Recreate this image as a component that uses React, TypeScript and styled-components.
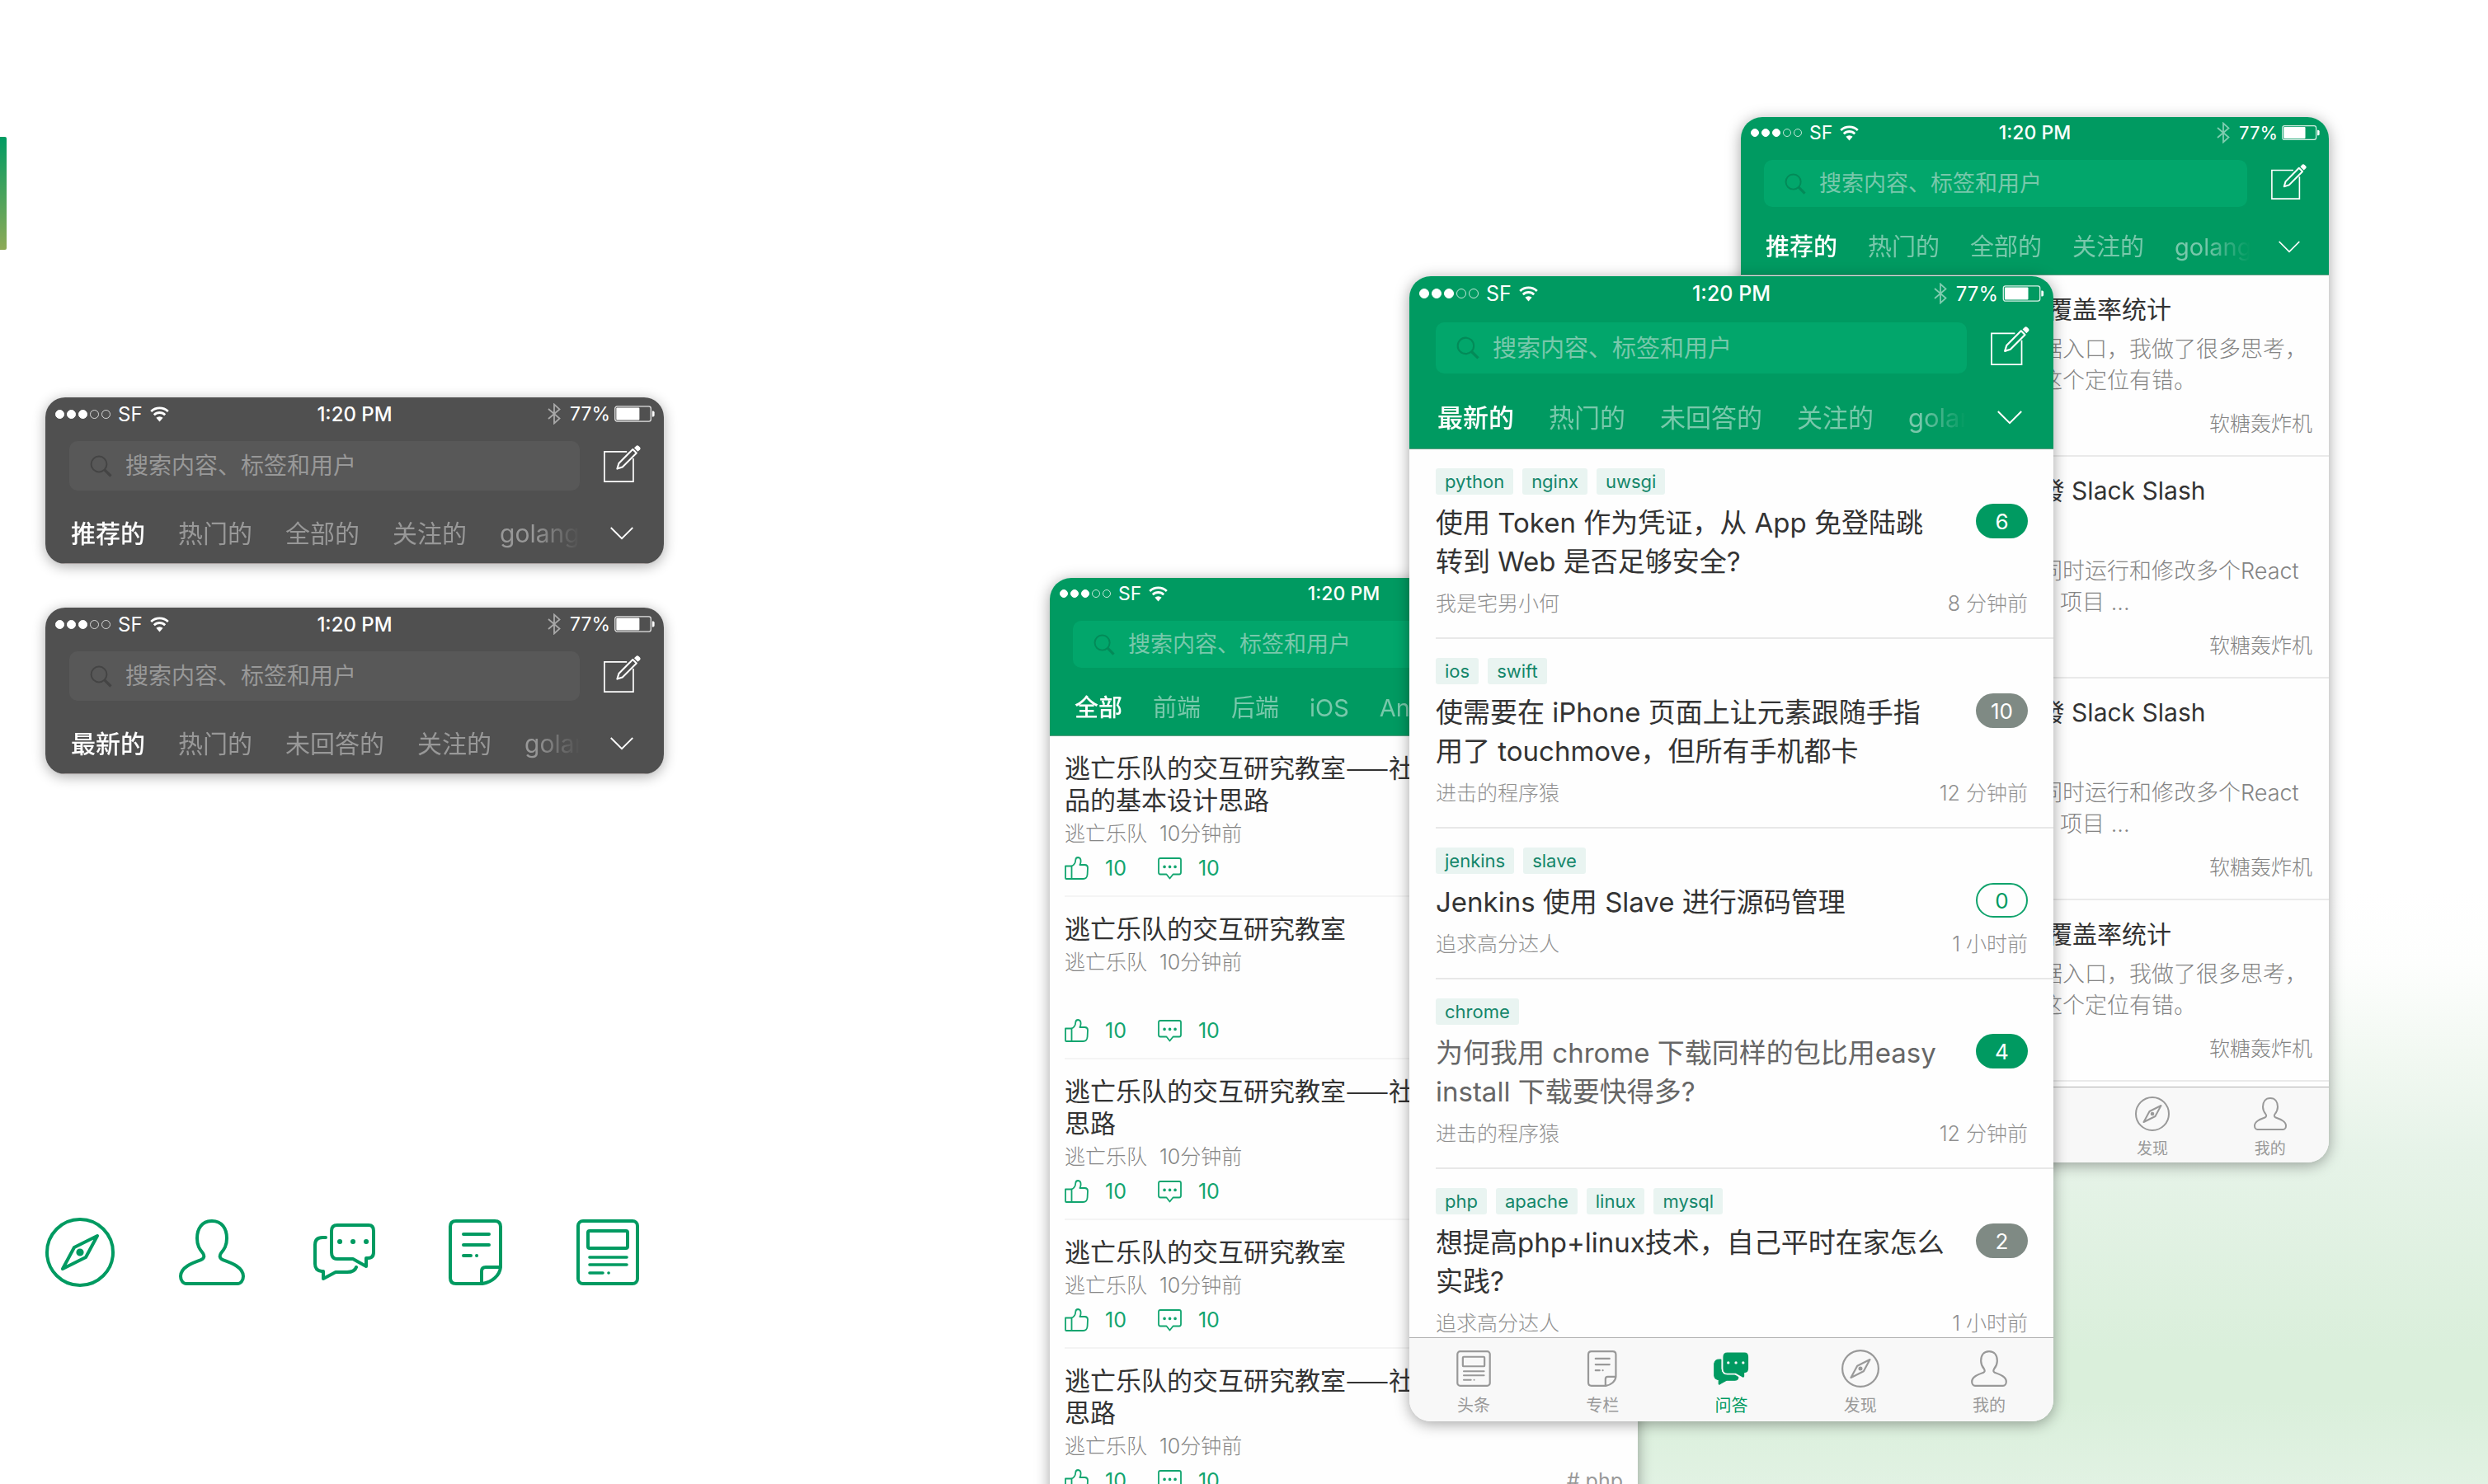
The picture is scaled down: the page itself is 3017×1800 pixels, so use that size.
import React from "react";
import styled, { createGlobalStyle, css } from "styled-components";

/* ---------- sizes shared by the three device scales ---------- */

type SizeKey = "s" | "m" | "l";

const sizes = {
  s: {
    status: 38, statusFont: 23, dot: 10, battery: 46, searchTop: 14, search: 57, searchFont: 27, glass: 26,
    tabFont: 29, tabGap: 37, tabRow: 83, tabPad: 15, edit: 44, chevron: 26, chevronEnd: 35,
    padLeft: 28, padRight: 26, rowGap: 29, nav: 92, navIcon: 42, navFont: 19,
  },
  m: {
    status: 40, statusFont: 24, dot: 11, battery: 49, searchTop: 13, search: 60, searchFont: 28, glass: 27,
    tabFont: 30, tabGap: 40, tabRow: 89, tabPad: 16, edit: 46, chevron: 28, chevronEnd: 37,
    padLeft: 29, padRight: 27, rowGap: 29, nav: 98, navIcon: 44, navFont: 20,
  },
  l: {
    status: 42, statusFont: 25, dot: 12, battery: 51, searchTop: 14, search: 62, searchFont: 29, glass: 28,
    tabFont: 31, tabGap: 42, tabRow: 92, tabPad: 16, edit: 48, chevron: 30, chevronEnd: 38,
    padLeft: 32, padRight: 28, rowGap: 29, nav: 102, navIcon: 46, navFont: 20,
  },
};

const tones = {
  green: { bar: "#009a61", field: "#02a66b", glass: "#038a58", hint: "#78c8ab", line: "#5f9c83" },
  gray: { bar: "#505050", field: "#585858", glass: "#444444", hint: "#989898", line: "#a8a0a0" },
};

type ToneKey = keyof typeof tones;

const latin = `"Inter", "Noto Sans CJK SC", sans-serif`;
const hanzi = `"Noto Sans CJK SC", sans-serif`;

const GlobalStyle = createGlobalStyle`
  *, *::before, *::after { box-sizing: border-box; }
  body { margin: 0; background: #fff; font-family: ${latin}; color: #333; }
  h2, p, ul { margin: 0; padding: 0; }
  ul { list-style: none; }
  button { border: 0; padding: 0; background: none; font: inherit; color: inherit; cursor: pointer; }
  a { color: inherit; text-decoration: none; }
  svg { display: block; flex: none; }
`;

/* ---------- page frame ---------- */

const Page = styled.main`
  display: flex;
  justify-content: space-between;
  height: 100vh;
  overflow: hidden;
  background:
    linear-gradient(180deg, #fff 0, #fdfefd 90px, #f1f8f1 210px, #e6f3e8 320px, #daefdb 560px, #daefdb 620px, #e4f3e6 760px)
    right bottom / 1500px 720px no-repeat,
    #fff;
`;

const Aside = styled.section`
  width: 805px;
  flex: none;
  padding-top: 166px;
`;

const Marker = styled.div`
  width: 8px;
  height: 137px;
  border-radius: 0 2px 2px 0;
  background: linear-gradient(180deg, #009b62, #8eaa56);
`;

const Samples = styled.div`
  display: flex;
  flex-direction: column;
  gap: 53px;
  margin-top: 179px;
  padding-left: 55px;
`;

const Sample = styled.div`
  border-radius: 24px;
  overflow: hidden;
  box-shadow: 0 3px 16px rgba(0, 0, 0, 0.32);
`;

const IconRow = styled.div`
  display: flex;
  gap: 76px;
  margin-top: 538px;
  padding-left: 55px;
  color: #009a61;
`;

const Showcase = styled.section`
  display: grid;
  grid-template-columns: 436px 277px 125px 379px 334px;
  align-items: start;
  padding-right: 193px;
`;

const Phone = styled.article<{ $area: string; $top: number; $layer: number }>`
  grid-row: 1;
  grid-column: ${(p) => p.$area};
  margin-top: ${(p) => p.$top}px;
  z-index: ${(p) => p.$layer};
  display: flex;
  flex-direction: column;
  aspect-ratio: 750 / 1334;
  border-radius: 26px;
  overflow: hidden;
  background: #fefefe;
  box-shadow: 0 3px 18px rgba(0, 0, 0, 0.36);
`;

const Feed = styled.div`
  flex: 1;
  min-height: 0;
  overflow: hidden;
`;

/* ---------- top bar ---------- */

const Bar = styled.header<{ $tone: ToneKey }>`
  flex: none;
  background: ${(p) => tones[p.$tone].bar};
  border-bottom: 1px solid ${(p) => tones[p.$tone].line};
  color: #fff;
`;

const Status = styled.div<{ $size: SizeKey }>`
  display: grid;
  grid-template-columns: 1fr auto 1fr;
  align-items: center;
  height: ${(p) => sizes[p.$size].status}px;
  padding: 0 11px;
  font-size: ${(p) => sizes[p.$size].statusFont}px;
`;

const StatusGroup = styled.div`
  display: flex;
  align-items: center;
  gap: 9px;
  padding-left: 1px;
`;

const StatusEnd = styled.div<{ $size: SizeKey }>`
  display: flex;
  align-items: center;
  justify-content: flex-end;
  gap: 5px;
  font-size: ${(p) => sizes[p.$size].statusFont - 1}px;
`;

const Percent = styled.span`
  padding-left: 6px;
`;

const Dots = styled.span`
  display: flex;
  gap: 3px;
`;

const Dot = styled.i<{ $size: SizeKey; $on: boolean }>`
  width: ${(p) => sizes[p.$size].dot}px;
  height: ${(p) => sizes[p.$size].dot}px;
  border: 1px solid #fff;
  border-radius: 50%;
  opacity: ${(p) => (p.$on ? 1 : 0.75)};
  background: ${(p) => (p.$on ? "#fff" : "transparent")};
`;

const Clock = styled.time`
  font-weight: 500;
`;

const SearchRow = styled.div<{ $size: SizeKey }>`
  display: flex;
  align-items: flex-start;
  gap: ${(p) => sizes[p.$size].rowGap}px;
  padding: ${(p) => sizes[p.$size].searchTop}px ${(p) => sizes[p.$size].padRight}px 0
    ${(p) => sizes[p.$size].padLeft}px;
`;

const SearchBox = styled.label<{ $size: SizeKey; $tone: ToneKey }>`
  flex: 1;
  display: flex;
  align-items: center;
  gap: 16px;
  height: ${(p) => sizes[p.$size].search}px;
  padding-left: 25px;
  border-radius: 10px;
  background: ${(p) => tones[p.$tone].field};
  color: ${(p) => tones[p.$tone].glass};
`;

const SearchInput = styled.input<{ $size: SizeKey; $tone: ToneKey }>`
  flex: 1;
  min-width: 0;
  border: 0;
  padding: 0 0 4px;
  outline: 0;
  background: none;
  color: #fff;
  font-family: ${hanzi};
  font-size: ${(p) => sizes[p.$size].searchFont}px;
  &::placeholder { color: ${(p) => tones[p.$tone].hint}; opacity: 1; }
`;

const ComposeButton = styled.button`
  margin-top: 4px;
`;

const TabRow = styled.nav<{ $size: SizeKey }>`
  display: flex;
  align-items: center;
  justify-content: space-between;
  height: ${(p) => sizes[p.$size].tabRow - 1}px;
  padding: ${(p) => sizes[p.$size].tabPad}px ${(p) => sizes[p.$size].chevronEnd}px 0
    ${(p) => sizes[p.$size].padLeft + 2}px;
`;

const Tabs = styled.div<{ $size: SizeKey }>`
  flex: 1;
  min-width: 0;
  display: flex;
  gap: ${(p) => sizes[p.$size].tabGap}px;
  margin-right: ${(p) => sizes[p.$size].chevron + 8}px;
  overflow: hidden;
  mask-image: linear-gradient(90deg, #000 calc(100% - 56px), transparent);
`;

const Tab = styled.button<{ $size: SizeKey; $tone: ToneKey; $active: boolean }>`
  flex: none;
  font-size: ${(p) => sizes[p.$size].tabFont}px;
  line-height: 44px;
  font-weight: ${(p) => (p.$active ? 500 : 400)};
  color: ${(p) => (p.$active ? "#fff" : tones[p.$tone].hint)};
`;

/* ---------- bottom bar ---------- */

const NavBar = styled.nav<{ $size: SizeKey }>`
  flex: none;
  display: grid;
  grid-template-columns: repeat(5, 1fr);
  height: ${(p) => sizes[p.$size].nav}px;
  border-top: 1px solid #b0b0b0;
  background: #f8f8f8;
`;

const NavItem = styled.button<{ $size: SizeKey; $active: boolean }>`
  display: flex;
  flex-direction: column;
  align-items: center;
  justify-content: center;
  gap: 8px;
  padding-top: 8px;
  font-size: ${(p) => sizes[p.$size].navFont}px;
  line-height: 28px;
  color: ${(p) => (p.$active ? "#009a61" : "#999")};
`;

/* ---------- article list (left) ---------- */

const Story = styled.section<{ $tall?: boolean }>`
  display: flex;
  flex-direction: column;
  min-height: ${(p) => (p.$tall ? 197 : 0)}px;
  margin-left: 18px;
  padding: 17px 18px 14px 0;
  border-bottom: 2px solid #f4f4f4;
`;

const StoryTitle = styled.h2`
  font: 400 31px/39px ${hanzi};
  white-space: pre-line;
`;

const StoryMeta = styled.p`
  display: flex;
  gap: 15px;
  font-size: 25px;
  line-height: 46px;
  font-weight: 300;
  color: #868686;
`;

const Stats = styled.div`
  display: flex;
  align-items: center;
  gap: 38px;
  height: 38px;
  margin-top: auto;
  color: #12a56f;
  font-size: 25px;
`;

const Stat = styled.button`
  display: flex;
  align-items: center;
  gap: 20px;
`;

const Topic = styled.a`
  margin-left: auto;
  color: #999;
`;

/* ---------- question list (centre) ---------- */

const Question = styled.section`
  margin-left: 32px;
  padding: 23px 31px 23px 0;
  border-bottom: 2px solid #e8e8e8;
`;

const Tags = styled.ul`
  display: flex;
  gap: 11px;
`;

const Tag = styled.a`
  display: block;
  padding: 0 11px;
  border-radius: 3px;
  background: #e9f4f1;
  color: #14866a;
  font-size: 22px;
  line-height: 32px;
`;

const QuestionBody = styled.div`
  display: flex;
  justify-content: space-between;
  align-items: flex-start;
  margin-top: 11px;
`;

const QuestionTitle = styled.h2<{ $read?: boolean }>`
  font-size: 33px;
  line-height: 47px;
  font-weight: 400;
  white-space: pre-line;
  color: ${(p) => (p.$read ? "#666" : "#333")};
`;

const badgeLook = {
  solid: css`background: #009a61; color: #fff;`,
  muted: css`background: #7f8a84; color: #fff;`,
  empty: css`border: 2px solid #10a36c; color: #009a61;`,
};

const Badge = styled.span<{ $look: keyof typeof badgeLook }>`
  flex: none;
  display: flex;
  align-items: center;
  justify-content: center;
  width: 63px;
  height: 42px;
  border-radius: 21px;
  font-size: 26px;
  ${(p) => badgeLook[p.$look]}
`;

const QuestionMeta = styled.p`
  display: flex;
  justify-content: space-between;
  margin-top: 9px;
  font-size: 25px;
  line-height: 36px;
  font-weight: 300;
  color: #909090;
`;

/* ---------- column list (right) ---------- */

const Post = styled.section`
  padding: 17px 20px 20px 12px;
  border-bottom: 2px solid #eaeaea;
`;

const PostTitle = styled.h2<{ $tall: boolean }>`
  min-height: ${(p) => (p.$tall ? 97 : 48)}px;
  font-size: 30px;
  line-height: 48px;
  font-weight: 400;
  white-space: nowrap;
`;

const PostText = styled.p`
  margin-top: 6px;
  font-size: 27px;
  line-height: 38px;
  font-weight: 300;
  white-space: pre;
  color: #848484;
`;

const PostAuthor = styled.p`
  margin-top: 15px;
  font-size: 25px;
  line-height: 36px;
  font-weight: 300;
  text-align: right;
  color: #848484;
`;

/* ---------- drawings ---------- */

type IconName = "news" | "note" | "chat" | "chatSolid" | "compass" | "person";

const frontBubble =
  "M34 9H72Q78 9 78 16V42Q78 49 71 49H69V59L53 50H34Q27 50 27 42V16Q27 9 34 9Z";

const shapes: Record<IconName, React.ReactNode> = {
  compass: (
    <>
      <circle cx="42" cy="42" r="40" />
      <path d="M63 22L49 48L21 62L35 36Z" />
      <circle cx="42" cy="42" r="2.6" fill="currentColor" />
    </>
  ),
  person: (
    <path d="M42 4C54 4 60 13 60 25C60 34 57 38 53 43C51 46 51 49 55 51C66 55 80 60 80 71C80 76 77 80 73 80H11C7 80 4 76 4 71C4 60 18 55 29 51C33 49 33 46 31 43C27 38 24 34 24 25C24 13 30 4 42 4Z" />
  ),
  chat: (
    <>
      <path d={frontBubble} />
      <path d="M20 24H16Q7 24 7 33V56Q7 64 15 65H17V74L32 66H46Q55 66 57 60" />
      <path d="M37 29h.1M53 29h.1M69 29h.1" strokeWidth="6" />
    </>
  ),
  chatSolid: (
    <>
      <path
        d="M20 22H16Q7 22 5 31V58Q6 66 15 67V76Q16 78 18 76L32 68H50Q58 68 58 61L50 56H34Q20 54 20 42Z"
        fill="currentColor"
        strokeWidth="2"
      />
      <path d={frontBubble} stroke="#f8f8f8" strokeWidth="11" />
      <path d={frontBubble} fill="currentColor" strokeWidth="5" />
      <path d="M36 29h.1M53 29h.1M69 29h.1" stroke="#f8f8f8" strokeWidth="6" />
    </>
  ),
  note: (
    <>
      <path d="M72 60V11Q72 4 65 4H18Q11 4 11 11V73Q11 80 18 80H50C62 78 71 70 72 60ZM49 80V65Q49 60 54 60H72" />
      <path d="M27 20H58M27 33H58M27 46H36M43 46h.1" />
    </>
  ),
  news: (
    <>
      <rect x="6" y="4" width="72" height="76" rx="6" />
      <rect x="18" y="16" width="48" height="21" rx="2" />
      <path d="M20 48H65M20 57H65M20 67H36M43 67h.1" strokeWidth="3.6" />
    </>
  ),
};

const Icon = ({ name, size }: { name: IconName; size: number }) => (
  <svg width={size} height={size} viewBox="0 0 84 84" fill="none" stroke="currentColor" strokeWidth="4" strokeLinecap="round" strokeLinejoin="round" aria-hidden="true">
    {shapes[name]}
  </svg>
);

const Wifi = () => (
  <svg width="23" height="20" viewBox="0 0 23 20" fill="none" stroke="#fff" strokeWidth="2.8" aria-hidden="true">
    <path d="M1.2 7A15 15 0 0 1 21.8 7M4.8 11.2A9.6 9.6 0 0 1 18.2 11.2" />
    <path d="M11.5 19.5L7.4 14.8A6 6 0 0 1 15.6 14.8Z" fill="#fff" stroke="none" />
  </svg>
);

const Bluetooth = () => (
  <svg width="16" height="26" viewBox="0 0 16 26" fill="none" stroke="#fff" strokeWidth="1.8" opacity="0.5" aria-hidden="true">
    <path d="M1 7L14.5 18.6L8 24.5V1.5L14.5 7.4L1 19" />
  </svg>
);

const Battery = ({ size }: { size: number }) => (
  <svg width={size} height="20" viewBox="0 0 50 20" fill="none" aria-hidden="true">
    <rect x="0.8" y="0.8" width="44.4" height="18.4" rx="2.6" stroke="#fff" strokeWidth="1.3" opacity="0.85" />
    <rect x="2.4" y="2.4" width="28.6" height="15.2" rx="1" fill="#fff" />
    <path d="M46.8 6.5H48Q49.6 6.5 49.6 8.2V11.8Q49.6 13.5 48 13.5H46.8Z" fill="#fff" />
  </svg>
);

const Glass = ({ size }: { size: number }) => (
  <svg width={size} height={size} viewBox="0 0 27 27" fill="none" stroke="currentColor" strokeWidth="2" aria-hidden="true">
    <circle cx="11" cy="11" r="9.4" />
    <path d="M17.8 17.8L25.5 25.5" strokeWidth="3.2" />
  </svg>
);

const Compose = ({ size }: { size: number }) => (
  <svg width={size} height={size} viewBox="0 0 49 49" fill="none" stroke="#fff" strokeWidth="1.8" aria-hidden="true">
    <path d="M30 9.5H1V48H38.3V18" />
    <path d="M17.5 31.5L19.6 24.6L37.6 6.4L42.4 11.2L24.3 29.4Z" strokeWidth="2.2" strokeLinejoin="round" />
    <path d="M39.4 4.6L42.2 1.8Q43.6 .6 45.2 2.1L46.9 3.8Q48.3 5.4 47 6.7L44.2 9.4Z" fill="#fff" stroke="none" />
  </svg>
);

const Chevron = ({ size }: { size: number }) => (
  <svg width={size} height={size / 2 + 2} viewBox="0 0 30 17" fill="none" stroke="#fff" strokeWidth="2" aria-hidden="true">
    <path d="M.8 1L15 15.2L29.2 1" />
  </svg>
);

const Thumb = () => (
  <svg width="29" height="28" viewBox="0 0 29 28" fill="none" stroke="currentColor" strokeWidth="1.8" strokeLinejoin="round" aria-hidden="true">
    <path d="M1 11.5H8.5V27H2Q1 27 1 26ZM8.5 11.5Q13 9.5 13.2 4.5Q13.4 1 16.2 1Q19.6 1.2 19.6 5.5Q19.6 8 18.4 10H24.5Q28 10.2 28 13.4L27.6 21.5Q27.2 27 22.5 27H8.5" />
  </svg>
);

const Bubble = () => (
  <svg width="29" height="27" viewBox="0 0 29 27" fill="none" stroke="currentColor" strokeWidth="1.8" strokeLinejoin="round" strokeLinecap="round" aria-hidden="true">
    <path d="M3 1H26Q28 1 28 3V18Q28 20.5 26 20.5H18.5L14.5 25.5L10.5 20.5H3Q1 20.5 1 18V3Q1 1 3 1Z" />
    <path d="M8 11.4h.1M14.5 11.4h.1M21 11.4h.1" strokeWidth="3.6" />
  </svg>
);

/* ---------- assembled parts ---------- */

const TopBar = ({ size, tone, tabs }: { size: SizeKey; tone: ToneKey; tabs: string[] }) => (
  <Bar $tone={tone}>
    <Status $size={size}>
      <StatusGroup>
        <Dots>
          {[0, 1, 2, 3, 4].map((n) => (
            <Dot key={n} $size={size} $on={n < 3} />
          ))}
        </Dots>
        <span>SF</span>
        <Wifi />
      </StatusGroup>
      <Clock>1:20 PM</Clock>
      <StatusEnd $size={size}>
        <Bluetooth />
        <Percent>77%</Percent>
        <Battery size={sizes[size].battery} />
      </StatusEnd>
    </Status>
    <SearchRow $size={size}>
      <SearchBox $size={size} $tone={tone}>
        <Glass size={sizes[size].glass} />
        <SearchInput $size={size} $tone={tone} type="text" aria-label="搜索" placeholder="搜索内容、标签和用户" />
      </SearchBox>
      <ComposeButton type="button" aria-label="撰写">
        <Compose size={sizes[size].edit} />
      </ComposeButton>
    </SearchRow>
    <TabRow $size={size}>
      <Tabs $size={size}>
        {tabs.map((label, i) => (
          <Tab key={label} type="button" $size={size} $tone={tone} $active={i === 0}>
            {label}
          </Tab>
        ))}
      </Tabs>
      <button type="button" aria-label="更多">
        <Chevron size={sizes[size].chevron} />
      </button>
    </TabRow>
  </Bar>
);

const navEntries: { label: string; icon: IconName; activeIcon?: IconName }[] = [
  { label: "头条", icon: "news" },
  { label: "专栏", icon: "note" },
  { label: "问答", icon: "chat", activeIcon: "chatSolid" },
  { label: "发现", icon: "compass" },
  { label: "我的", icon: "person" },
];

const BottomNav = ({ size, active }: { size: SizeKey; active: string }) => (
  <NavBar $size={size}>
    {navEntries.map(({ label, icon, activeIcon }) => {
      const on = label === active;
      return (
        <NavItem key={label} type="button" $size={size} $active={on}>
          <Icon name={on && activeIcon ? activeIcon : icon} size={sizes[size].navIcon} />
          {label}
        </NavItem>
      );
    })}
  </NavBar>
);

const longTitle = "逃亡乐队的交互研究教室——社\n思路";
const shortTitle = "逃亡乐队的交互研究教室";

const stories = [
  { title: "逃亡乐队的交互研究教室——社\n品的基本设计思路" },
  { title: shortTitle, tall: true },
  { title: longTitle },
  { title: shortTitle },
  { title: longTitle, topic: "# php" },
];

const questions: {
  tags: string[]; title: string; count: number; look: keyof typeof badgeLook; author: string; time: string; read?: boolean;
}[] = [
  { tags: ["python", "nginx", "uwsgi"], title: "使用 Token 作为凭证，从 App 免登陆跳\n转到 Web 是否足够安全?", count: 6, look: "solid", author: "我是宅男小何", time: "8 分钟前" },
  { tags: ["ios", "swift"], title: "使需要在 iPhone 页面上让元素跟随手指\n用了 touchmove，但所有手机都卡", count: 10, look: "muted", author: "进击的程序猿", time: "12 分钟前" },
  { tags: ["jenkins", "slave"], title: "Jenkins 使用 Slave 进行源码管理", count: 0, look: "empty", author: "追求高分达人", time: "1 小时前" },
  { tags: ["chrome"], title: "为何我用 chrome 下载同样的包比用easy\ninstall 下载要快得多?", count: 4, look: "solid", author: "进击的程序猿", time: "12 分钟前", read: true },
  { tags: ["php", "apache", "linux", "mysql"], title: "想提高php+linux技术，自己平时在家怎么\n实践?", count: 2, look: "muted", author: "追求高分达人", time: "1 小时前" },
];

const coverage = {
  title: "前端项目如何进行单元测试覆盖率统计",
  tall: false,
  text: "关于如何重新设计产品中的数据入口，我做了很多思考，\n最后还是觉得之前我们对于它这个定位有错。",
};
const slack = {
  title: "一步步學用 TypeScript 開發 Slack Slash",
  tall: true,
  text: "在一台电脑上面可以很方便地同时运行和修改多个React\n以及其他各类常见的 WebView 项目 ...",
};
const posts = [coverage, slack, slack, coverage];

const assetIcons: IconName[] = ["compass", "person", "chat", "note", "news"];

export default function App() {
  return (
    <>
      <GlobalStyle />
      <Page>
        <Aside>
          <Marker />
          <Samples>
            <Sample>
              <TopBar size="m" tone="gray" tabs={["推荐的", "热门的", "全部的", "关注的", "golang"]} />
            </Sample>
            <Sample>
              <TopBar size="m" tone="gray" tabs={["最新的", "热门的", "未回答的", "关注的", "golang"]} />
            </Sample>
          </Samples>
          <IconRow>
            {assetIcons.map((name) => (
              <Icon key={name} name={name} size={84} />
            ))}
          </IconRow>
        </Aside>

        <Showcase>
          <Phone $area="4 / 6" $top={142} $layer={1}>
            <TopBar size="s" tone="green" tabs={["推荐的", "热门的", "全部的", "关注的", "golang"]} />
            <Feed>
              {posts.map((post, i) => (
                <Post key={i}>
                  <PostTitle $tall={post.tall}>{post.title}</PostTitle>
                  <PostText>{post.text}</PostText>
                  <PostAuthor>软糖轰炸机</PostAuthor>
                </Post>
              ))}
            </Feed>
            <BottomNav size="s" active="专栏" />
          </Phone>

          <Phone $area="1 / 3" $top={701} $layer={2}>
            <TopBar size="s" tone="green" tabs={["全部", "前端", "后端", "iOS", "Android", "golang"]} />
            <Feed>
              {stories.map((story, i) => (
                <Story key={i} $tall={story.tall}>
                  <StoryTitle>{story.title}</StoryTitle>
                  <StoryMeta>
                    <span>逃亡乐队</span>
                    <span>10分钟前</span>
                  </StoryMeta>
                  <Stats>
                    <Stat type="button"><Thumb />10</Stat>
                    <Stat type="button"><Bubble />10</Stat>
                    {story.topic && <Topic href="#php">{story.topic}</Topic>}
                  </Stats>
                </Story>
              ))}
            </Feed>
          </Phone>

          <Phone $area="2 / 5" $top={335} $layer={3}>
            <TopBar size="l" tone="green" tabs={["最新的", "热门的", "未回答的", "关注的", "golang"]} />
            <Feed>
              {questions.map((q) => (
                <Question key={q.title}>
                  <Tags>
                    {q.tags.map((tag) => (
                      <li key={tag}><Tag href={`#${tag}`}>{tag}</Tag></li>
                    ))}
                  </Tags>
                  <QuestionBody>
                    <QuestionTitle $read={q.read}>{q.title}</QuestionTitle>
                    <Badge $look={q.look}>{q.count}</Badge>
                  </QuestionBody>
                  <QuestionMeta>
                    <span>{q.author}</span>
                    <span>{q.time}</span>
                  </QuestionMeta>
                </Question>
              ))}
            </Feed>
            <BottomNav size="l" active="问答" />
          </Phone>
        </Showcase>
      </Page>
    </>
  );
}
